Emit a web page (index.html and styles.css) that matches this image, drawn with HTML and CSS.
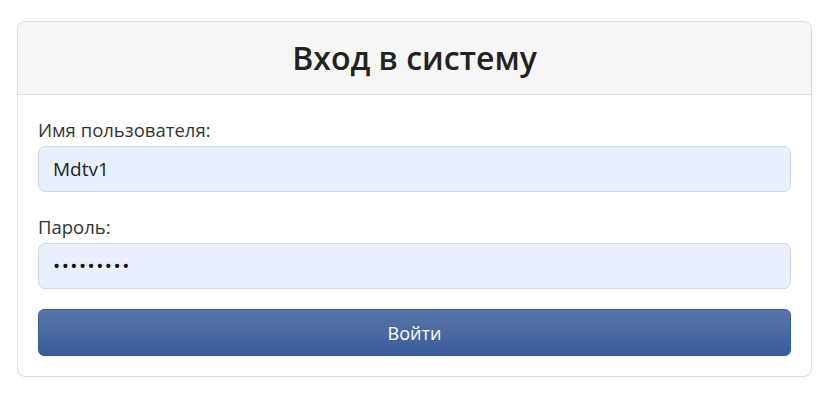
FILE: index.html
```html
<!DOCTYPE html>
<html lang="ru">
<head>
<meta charset="utf-8">
<title>Вход в систему</title>
<link rel="stylesheet" href="styles.css">
</head>
<body>
<div class="card">
  <div class="card-header">
    <h1 class="title">Вход в систему</h1>
  </div>
  <form class="card-body">
    <div class="field">
      <label class="label" for="user">Имя пользователя:</label>
      <input class="input" id="user" type="text" value="Mdtv1">
    </div>
    <div class="field">
      <label class="label" for="pass">Пароль:</label>
      <input class="input input-pass" id="pass" type="password" value="123456789">
    </div>
    <button class="btn" type="button">Войти</button>
  </form>
</div>
</body>
</html>
```

FILE: styles.css
```css
* { box-sizing: border-box; }
html, body { background: #fff; }
body {
  margin: 0;
  padding: 21px 0 0 17px;
  font-family: "Open Sans", "Noto Sans", sans-serif;
  color: #333;
}
.card {
  width: 795px;
  border: 1px solid #dcdcdc;
  border-radius: 8px;
  overflow: hidden;
  background: #fff;
}
.card-header {
  height: 73px;
  background: #f6f6f6;
  border-bottom: 1px solid #dcdcdc;
  display: flex;
  align-items: center;
  justify-content: center;
}
.title {
  margin: 0;
  font-size: 32px;
  font-weight: 600;
  color: #222;
  line-height: 1;
}
.card-body {
  padding: 22px 20px 20px;
  display: flex;
  flex-direction: column;
}
.field {
  display: flex;
  flex-direction: column;
  margin-bottom: 22px;
}
.field + .field { margin-bottom: 20px; }
.label {
  font-size: 18.5px;
  line-height: 26px;
  margin-bottom: 3px;
  color: #333;
}
.input {
  height: 46px;
  border: 1px solid #d0d8e4;
  border-radius: 7px;
  background: #e8f0fe;
  padding: 0 14px;
  font-family: inherit;
  font-size: 19px;
  color: #222;
  outline: none;
}
.input-pass { font-size: 19px; letter-spacing: 1.5px; color: #111; }
.btn {
  height: 47px;
  border: 1px solid #3a5d97;
  border-radius: 6px;
  background: linear-gradient(#5877a9, #385c98);
  color: #fff;
  font-family: inherit;
  font-size: 18px;
}
```
